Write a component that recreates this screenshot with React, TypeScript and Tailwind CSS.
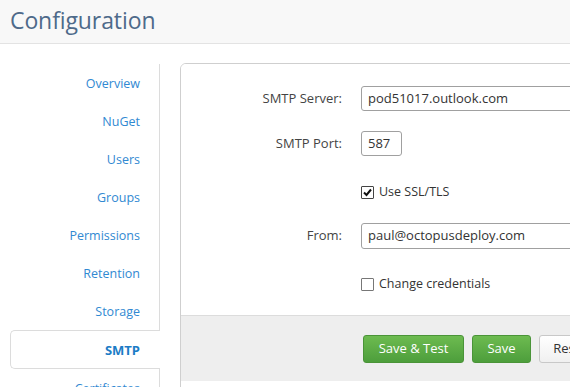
import React from "react";

const navItems = [
  "Overview",
  "NuGet",
  "Users",
  "Groups",
  "Permissions",
  "Retention",
  "Storage",
  "SMTP",
  "Certificates",
];

const Checkbox = ({ checked }: { checked: boolean }) => (
  <span
    className={`flex h-[13px] w-[13px] items-center justify-center rounded-[1px] border bg-white ${
      checked ? "border-[#444]" : "border-[#777]"
    }`}
  >
    {checked && (
      <svg width="9" height="9" viewBox="0 0 9 9">
        <path d="M1 4.5 L3.5 7 L8 1.5" stroke="#111" strokeWidth="2" fill="none" />
      </svg>
    )}
  </span>
);

const Label = ({ text }: { text: string }) => (
  <div className="w-[161px] shrink-0 text-right text-[13px] text-[#444]">{text}</div>
);

const App = () => {
  return (
    <div
      className="h-[387px] w-[570px] overflow-hidden bg-white"
      style={{ fontFamily: '"Open Sans", "Noto Sans", sans-serif' }}
    >
      <div className="flex h-[44px] items-center border-b border-[#e3e3e3] bg-[#f8f8f8] pb-[2px] pl-[10px]">
        <h1 className="text-[23px] leading-none tracking-[-0.1px] text-[#4e6a8a]">Configuration</h1>
      </div>
      <div className="flex">
        <ul className="ml-[10px] mt-[20px] w-[150px] shrink-0">
          {navItems.map((item) =>
            item === "SMTP" ? (
              <li
                key={item}
                className="flex h-[39px] items-center justify-end rounded-l-[5px] border border-r-0 border-[#dcdcdc] bg-white pr-[20px] pt-[2px] text-[13px] font-bold text-[#1b7cc6]"
              >
                {item}
              </li>
            ) : (
              <li
                key={item}
                className="flex h-[38px] items-center justify-end border-r border-[#dcdcdc] pr-[19px] pt-[2px] text-[12.5px] text-[#3189d2]"
              >
                {item}
              </li>
            )
          )}
        </ul>
        <div className="ml-[20px] mt-[19px] w-[440px] shrink-0 overflow-hidden rounded-[6px] border border-[#cfcfcf]">
          <div className="flex h-[251px] flex-col bg-white">
            <div className="mt-[22px] flex items-center gap-[19px]">
              <Label text="SMTP Server:" />
              <div className="flex h-[25px] w-[260px] items-center rounded-[3px] border border-[#a0a0a0] pl-[6px] text-[13px] text-[#333]">
                pod51017.outlook.com
              </div>
            </div>
            <div className="mt-[20px] flex items-center gap-[19px]">
              <Label text="SMTP Port:" />
              <div className="flex h-[25px] w-[41px] items-center rounded-[3px] border border-[#a0a0a0] pl-[6px] text-[13px] text-[#333]">
                587
              </div>
            </div>
            <div className="mt-[26px] flex h-[20px] items-center gap-[19px]">
              <div className="w-[161px] shrink-0" />
              <label className="flex items-center gap-[5px] text-[12.5px] text-[#333]">
                <Checkbox checked={true} />
                Use SSL/TLS
              </label>
            </div>
            <div className="mt-[21px] flex items-center gap-[19px]">
              <Label text="From:" />
              <div className="flex h-[26px] w-[260px] items-center rounded-[3px] border border-[#a0a0a0] pl-[6px] text-[13px] text-[#333]">
                paul@octopusdeploy.com
              </div>
            </div>
            <div className="mt-[25px] flex h-[20px] items-center gap-[19px]">
              <div className="w-[161px] shrink-0" />
              <label className="flex items-center gap-[5px] text-[12.5px] text-[#333]">
                <Checkbox checked={false} />
                Change credentials
              </label>
            </div>
          </div>
          <div className="flex h-[66px] gap-[8px] border-t border-[#dcdcdc] bg-[#eeeeee] pl-[182px] pt-[19px]">
            <button className="h-[28px] w-[101px] rounded-[3px] border border-[#4a9438] bg-gradient-to-b from-[#6dbb50] to-[#4d9e3c] text-[13px] text-white">
              Save &amp; Test
            </button>
            <button className="h-[28px] w-[59px] rounded-[3px] border border-[#4a9438] bg-gradient-to-b from-[#6dbb50] to-[#4d9e3c] text-[13px] text-white">
              Save
            </button>
            <button className="h-[28px] w-[62px] rounded-[3px] border border-[#c8c8c8] bg-gradient-to-b from-white to-[#f0f0f0] text-[13px] text-[#333]">
              Reset
            </button>
          </div>
        </div>
      </div>
    </div>
  );
};

export default App;
